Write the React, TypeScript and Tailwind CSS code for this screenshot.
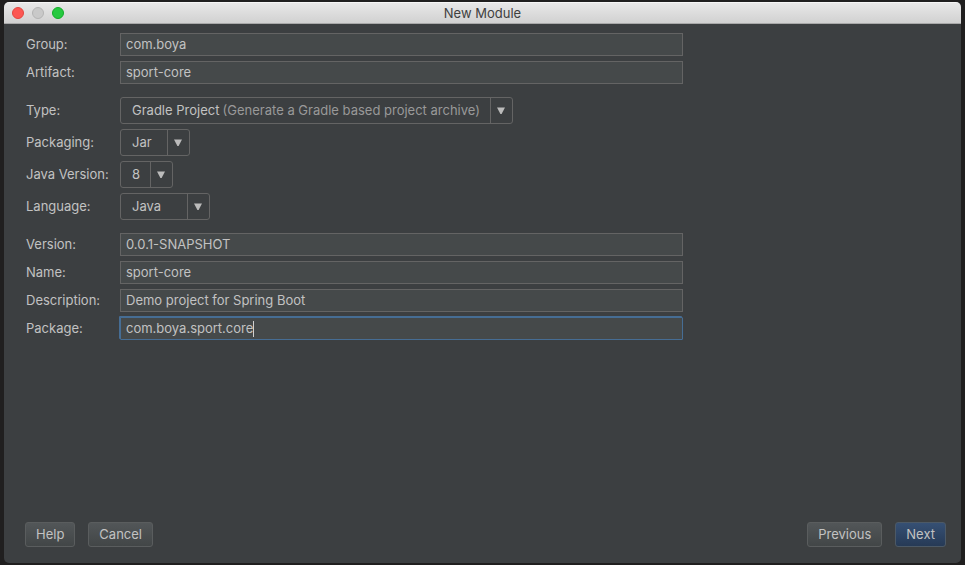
import { useState } from "react";

const FIELD_ROW = "grid grid-cols-[94px_minmax(0,1fr)] items-center";

type TextRowProps = {
  id: string;
  label: string;
  initial: string;
  active?: boolean;
};

function TextRow({ id, label, initial, active = false }: TextRowProps) {
  const [value, setValue] = useState(initial);
  return (
    <div className={FIELD_ROW}>
      <label htmlFor={id} className="pb-0.5">{label}</label>
      <div className="relative">
        <input
          id={id}
          type="text"
          value={value}
          spellCheck={false}
          onChange={(e) => setValue(e.target.value)}
          className={
            active
              ? "block h-[23px] w-full rounded-[1px] border border-[#466d94] bg-[#45494a] px-[5px] pb-0.5 text-[#c2c2c2] caret-transparent shadow-[-1px_-1px_0_#466d94] outline-none"
              : "block h-[23px] w-full border border-[#646464] bg-[#45494a] px-[5px] pb-0.5 text-[#c2c2c2] outline-none"
          }
        />
        {active && (
          <div className="pointer-events-none absolute inset-y-0 left-[6px] flex items-center">
            <span className="invisible whitespace-pre" aria-hidden="true">
              {value}
            </span>
            <span className="h-4 w-px bg-[#d0d0d0]" />
          </div>
        )}
      </div>
    </div>
  );
}

type ComboRowProps = {
  id: string;
  label: string;
  options: string[];
  width: string;
  hint?: string;
};

function ComboRow({ id, label, options, width, hint }: ComboRowProps) {
  return (
    <div className={FIELD_ROW}>
      <label htmlFor={id} className="pb-0.5">{label}</label>
      <div className={`relative h-[27px] ${width}`}>
        <select
          id={id}
          className="block h-full w-full appearance-none rounded-[3px] border border-[#646464] bg-[#3c3f41] pr-6 pb-0.5 pl-[11px] text-[#c2c2c2] outline-none"
        >
          {options.map((o) => (
            <option key={o}>{o}</option>
          ))}
        </select>
        {hint && (
          <span className="pointer-events-none absolute inset-y-0 right-[33px] flex items-center pb-0.5 text-[#999999]">
            {hint}
          </span>
        )}
        <span className="pointer-events-none absolute inset-y-px right-px flex w-[22px] items-center justify-center border-l border-[#646464] pr-0.5">
          <svg width="8" height="7" viewBox="0 0 8 7" aria-hidden="true">
            <path d="M0 0.5H8L4.6 7H3.4Z" fill="#bbbbbb" />
          </svg>
        </span>
      </div>
    </div>
  );
}

const BUTTON =
  "h-[25px] rounded-[3px] border border-[#5a5d5e] bg-linear-to-b from-[#525658] to-[#424647] px-[10px] pb-0.5 text-[#c2c2c2]";

export default function App() {
  return (
    <div className="flex min-h-screen flex-col bg-[#201f1f] px-1 py-0.5 font-['Inter','Liberation_Sans',sans-serif] text-[13px] leading-4 text-[#c2c2c2]">
      <div className="flex flex-1 flex-col overflow-hidden rounded-[5px] bg-[#3c3f41]">
        <header className="grid h-[22px] grid-cols-[1fr_auto_1fr] items-center border-t border-b border-t-[#f6f6f6] border-b-[#a9a9a9] bg-linear-to-b from-[#e8e8e8] to-[#d1d1d1] px-2 text-[#404040]">
          <div className="flex gap-2">
            <button type="button" aria-label="Close" className="size-3 rounded-full border border-[#e2463f] bg-[#fc5753]" />
            <button type="button" aria-label="Minimize" className="size-3 rounded-full border border-[#b4b4b4] bg-[#c9c9c9]" />
            <button type="button" aria-label="Zoom" className="size-3 rounded-full border border-[#12ac28] bg-[#26c940]" />
          </div>
          <h1>New Module</h1>
        </header>

        <form
          className="flex flex-1 flex-col justify-between pt-[9px] pr-[15px] pb-4 pl-[21px]"
          onSubmit={(e) => e.preventDefault()}
        >
          <div className="flex w-full max-w-[658px] flex-col gap-[13px] pl-px">
            <div className="flex flex-col gap-[5px]">
              <TextRow id="group" label="Group:" initial="com.boya" />
              <TextRow id="artifact" label="Artifact:" initial="sport-core" />
            </div>
            <div className="flex flex-col gap-[5px]">
              <ComboRow
                id="type"
                label="Type:"
                options={["Gradle Project"]}
                hint="(Generate a Gradle based project archive)"
                width="w-[393px]"
              />
              <ComboRow id="packaging" label="Packaging:" options={["Jar", "War"]} width="w-[70px]" />
              <ComboRow id="java-version" label="Java Version:" options={["8"]} width="w-[53px]" />
              <ComboRow id="language" label="Language:" options={["Java"]} width="w-[90px]" />
            </div>
            <div className="flex flex-col gap-[5px]">
              <TextRow id="version" label="Version:" initial="0.0.1-SNAPSHOT" />
              <TextRow id="name" label="Name:" initial="sport-core" />
              <TextRow id="description" label="Description:" initial="Demo project for Spring Boot" />
              <TextRow id="package" label="Package:" initial="com.boya.sport.core" active />
            </div>
          </div>

          <footer className="flex justify-between">
            <div className="flex gap-[13px]">
              <button type="button" className={BUTTON}>Help</button>
              <button type="button" className={BUTTON}>Cancel</button>
            </div>
            <div className="flex gap-[13px]">
              <button type="button" className={BUTTON}>Previous</button>
              <button
                type="submit"
                className="h-[25px] rounded-[3px] border border-[#4c5966] bg-linear-to-b from-[#365074] to-[#263a56] px-[10px] pb-0.5 text-[#c2c2c2]"
              >
                Next
              </button>
            </div>
          </footer>
        </form>
      </div>
    </div>
  );
}
